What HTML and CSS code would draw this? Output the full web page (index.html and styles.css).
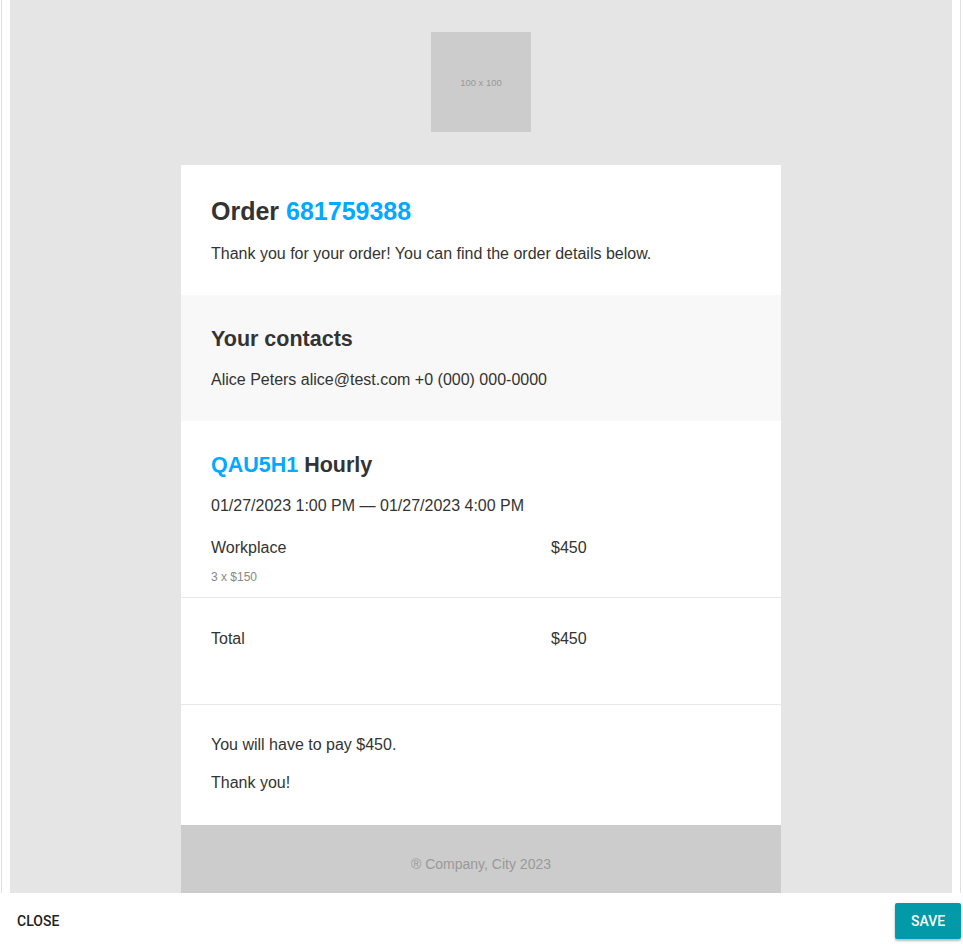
FILE: index.html
```html
<!DOCTYPE html>
<html lang="en">
<head>
    <meta charset="UTF-8">
    <meta name="viewport" content="width=device-width, initial-scale=1.0">
    <title>Order 681759388 - preview</title>
    <link rel="stylesheet" href="styles.css">
</head>
<body>
    <div class="dialog">
        <!-- Email preview -->
        <div class="preview">
            <div class="mail">
                <div class="logo">
                    <div class="logo-box">100 x 100</div>
                </div>

                <div class="card">
                    <div class="block intro">
                        <h1 class="title">Order <span class="accent">681759388</span></h1>
                        <p class="text lead">Thank you for your order! You can find the order details below.</p>
                    </div>

                    <div class="block contacts">
                        <h2 class="subtitle">Your contacts</h2>
                        <p class="text lead">Alice Peters alice@test.com +0 (000) 000-0000</p>
                    </div>

                    <div class="block booking">
                        <h2 class="subtitle"><span class="accent">QAU5H1</span> Hourly</h2>
                        <p class="text lead">01/27/2023 1:00 PM — 01/27/2023 4:00 PM</p>
                        <div class="line-row item">
                            <div class="line-name">
                                <div class="text">Workplace</div>
                                <div class="line-sub">3 x $150</div>
                            </div>
                            <div class="text">$450</div>
                        </div>
                    </div>

                    <div class="block totals">
                        <div class="line-row">
                            <div class="line-name text">Total</div>
                            <div class="text">$450</div>
                        </div>
                    </div>

                    <div class="block outro">
                        <p class="text">You will have to pay $450.</p>
                        <p class="text thanks">Thank you!</p>
                    </div>

                    <div class="mail-footer">® Company, City 2023</div>
                </div>
            </div>
        </div>

        <!-- Dialog actions -->
        <div class="actions">
            <button class="btn btn-flat">Close</button>
            <button class="btn btn-primary">Save</button>
        </div>
    </div>
</body>
</html>
```

FILE: styles.css
```css
body {
    margin: 0;
    font-family: "Liberation Sans", Arial, sans-serif;
    background-color: #fff;
    color: #333;
}

.dialog {
    height: 944px;
    display: flex;
    flex-direction: column;
    overflow: hidden;
}

/* preview frame */
.preview {
    height: 893px;
    flex: none;
    margin-left: 1px;
    width: 942px;
    padding: 0 8px;
    border-left: 1px solid #e0e0e0;
    border-right: 1px solid #e0e0e0;
    overflow: hidden;
}

.mail {
    height: 100%;
    background-color: #e5e5e5;
}

.logo {
    display: flex;
    justify-content: center;
    padding: 32px 0 33px;
}
.logo-box {
    width: 100px;
    height: 100px;
    background-color: #ccc;
    color: #999;
    font-size: 9.5px;
    display: flex;
    align-items: center;
    justify-content: center;
}

/* email card */
.card {
    width: 600px;
    margin: 0 auto;
    background-color: #fff;
}

.block {
    padding: 30px 30px 29px;
}

.title {
    margin: 0;
    font-size: 25px;
    line-height: 32px;
    font-weight: bold;
    color: #333;
}
.subtitle {
    margin: 0;
    font-size: 21.5px;
    line-height: 26px;
    font-weight: bold;
    color: #333;
}
.accent {
    color: #00aaff;
}

.text {
    margin: 0;
    font-size: 16px;
    line-height: 24px;
}
.intro .lead { margin-top: 15px; }
.contacts .lead,
.booking .lead { margin-top: 16px; }

.contacts {
    background-color: #f8f8f8;
    padding-top: 31px;
    padding-bottom: 29px;
}

.booking {
    padding-top: 31px;
    padding-bottom: 12px;
    border-bottom: 1px solid #e8e8e8;
}

.line-row {
    display: flex;
}
.line-name {
    width: 340px;
}
.item {
    margin-top: 18px;
}
.line-sub {
    margin-top: 9px;
    font-size: 12px;
    line-height: 16px;
    color: #888;
}

.totals {
    padding: 29px 30px 53px;
    border-bottom: 1px solid #e8e8e8;
}

.outro {
    padding-top: 28px;
    padding-bottom: 30px;
}
.outro .thanks { margin-top: 14px; }

.mail-footer {
    background-color: #ccc;
    color: #999;
    font-size: 14px;
    line-height: 20px;
    text-align: center;
    padding: 29px 0 40px;
}

/* dialog buttons */
.actions {
    flex: 1;
    display: flex;
    justify-content: space-between;
    align-items: flex-start;
    padding: 10px 2px 0 9px;
}
.btn {
    height: 36px;
    padding: 0 8px;
    border: none;
    border-radius: 2px;
    font-family: Roboto, "Liberation Sans", sans-serif;
    font-size: 14px;
    font-weight: 500;
    text-transform: uppercase;
    cursor: pointer;
}
.btn-flat {
    background: none;
    color: #212121;
}
.btn-primary {
    width: 66px;
    padding: 0 16px;
    background-color: #0299a8;
    color: #fff;
    box-shadow: 0 2px 2px rgba(0, 0, 0, 0.2), 0 1px 5px rgba(0, 0, 0, 0.12);
}
```
